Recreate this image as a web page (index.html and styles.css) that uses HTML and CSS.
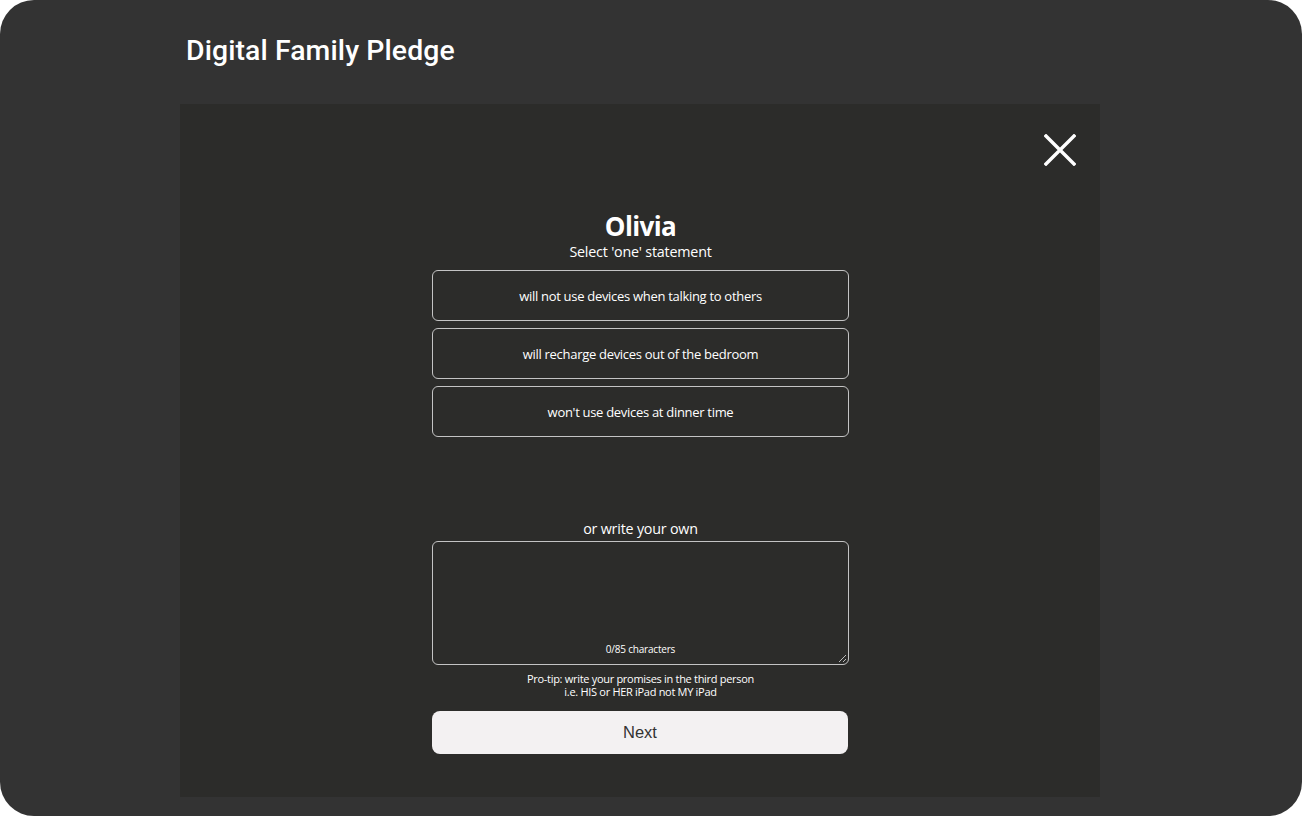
FILE: index.html
```html
<!DOCTYPE html>
<html lang="en">
<head>
<meta charset="utf-8">
<title>Digital Family Pledge</title>
<link rel="stylesheet" href="styles.css">
</head>
<body>
<div class="frame">
  <h1 class="title">Digital Family Pledge</h1>
  <main class="panel">
    <button class="close" aria-label="Close">
      <svg width="32" height="32" viewBox="0 0 32 32"><path d="M2 2 L30 30 M30 2 L2 30" stroke="#fff" stroke-width="3.4" stroke-linecap="square" fill="none"/></svg>
    </button>
    <section class="form">
      <h2 class="name">Olivia</h2>
      <p class="sub">Select 'one' statement</p>
      <div class="options">
        <button class="opt">will not use devices when talking to others</button>
        <button class="opt">will recharge devices out of the bedroom</button>
        <button class="opt">won't use devices at dinner time</button>
      </div>
      <p class="own">or write your own</p>
      <div class="textbox">
        <span class="count">0/85 characters</span>
        <svg class="grip" width="9" height="9" viewBox="0 0 9 9"><path d="M8 1 L1 8 M8 5 L5 8" stroke="#bbb" stroke-width="1" fill="none"/></svg>
      </div>
      <p class="tip">Pro-tip: write your promises in the third person<br>i.e. HIS or HER iPad not MY iPad</p>
      <button class="next">Next</button>
    </section>
  </main>
</div>
</body>
</html>
```
FILE: styles.css
```css
html, body {
  margin: 0;
  padding: 0;
  background: #ffffff;
}
.frame {
  width: 1302px;
  height: 816px;
  box-sizing: border-box;
  background: #333333;
  border-radius: 34px;
  padding: 0 202px 19px 180px;
  display: flex;
  flex-direction: column;
}
.title {
  margin: 0;
  padding: 33px 0 0 6px;
  height: 104px;
  box-sizing: border-box;
  font-family: Roboto, "Liberation Sans", sans-serif;
  font-weight: 500;
  font-size: 28.4px;
  line-height: 36px;
  color: #ffffff;
  letter-spacing: 0.1px;
}
.panel {
  flex: 1;
  background: #2c2c2a;
  position: relative;
  display: flex;
  justify-content: center;
}
.close {
  position: absolute;
  top: 30px;
  right: 24px;
  width: 32px;
  height: 32px;
  padding: 0;
  border: 0;
  background: none;
}
.close svg { display: block; }
.form {
  width: 417px;
  margin-left: 1px;
  padding-top: 106px;
  display: flex;
  flex-direction: column;
  align-items: center;
  font-family: "Open Sans", "Lato", sans-serif;
  color: #ffffff;
}
.name {
  margin: 0;
  font-family: "Open Sans", sans-serif;
  font-weight: 700;
  font-size: 26px;
  line-height: 32px;
  letter-spacing: -0.6px;
}
.sub {
  margin: 0;
  font-size: 14.3px;
  line-height: 20px;
  letter-spacing: -0.2px;
}
.options {
  width: 100%;
  margin-top: 8px;
  display: flex;
  flex-direction: column;
  gap: 7px;
}
.opt {
  height: 51px;
  width: 100%;
  background: transparent;
  border: 1px solid #c4c4c4;
  border-radius: 6px;
  color: #ffffff;
  font-family: "Open Sans", sans-serif;
  font-size: 13px;
  letter-spacing: -0.3px;
  padding: 0;
}
.own {
  margin: 82px 0 0;
  font-size: 14.3px;
  line-height: 20px;
  letter-spacing: -0.2px;
}
.textbox {
  position: relative;
  margin-top: 2px;
  width: 100%;
  height: 124px;
  box-sizing: border-box;
  border: 1px solid #c4c4c4;
  border-radius: 6px;
  display: flex;
  justify-content: center;
  align-items: flex-end;
  padding-bottom: 8px;
}
.count {
  font-size: 10px;
  letter-spacing: -0.2px;
  line-height: 14px;
}
.grip {
  position: absolute;
  right: 1px;
  bottom: 1px;
}
.tip {
  margin: 7px 0 0;
  text-align: center;
  font-size: 11px;
  line-height: 13px;
  letter-spacing: -0.3px;
}
.next {
  margin-top: 13px;
  width: 416px;
  margin-left: -1px;
  height: 43px;
  border: 0;
  border-radius: 8px;
  background: #f3f1f2;
  color: #333333;
  font-family: "Liberation Sans", Arial, sans-serif;
  font-size: 16.5px;
}
```
